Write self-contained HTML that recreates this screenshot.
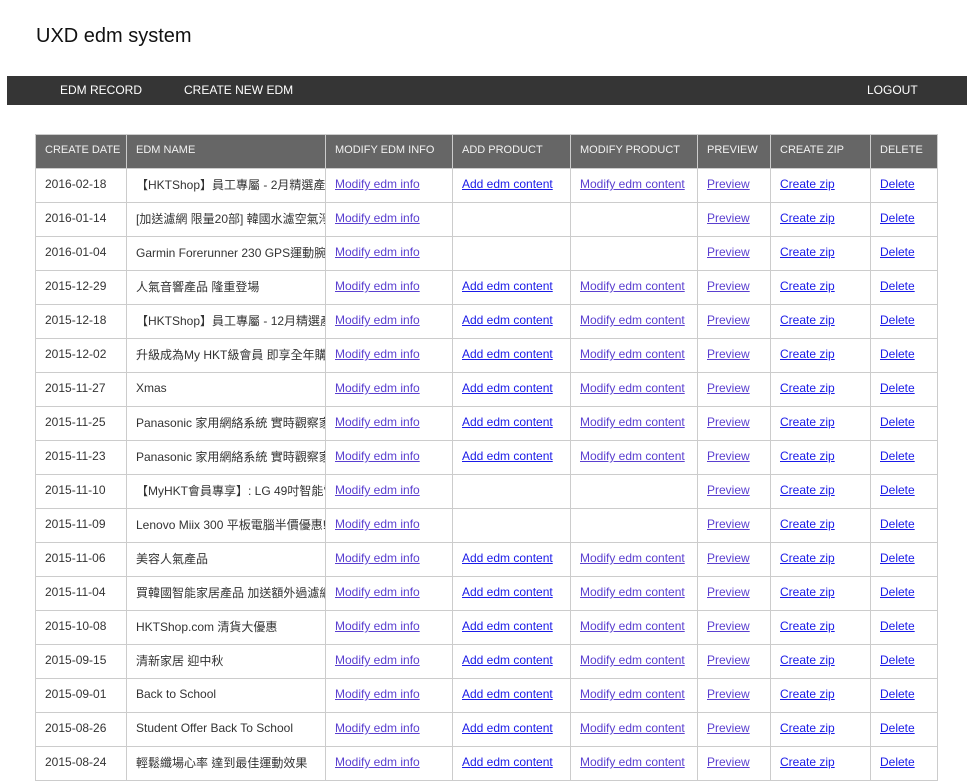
<!DOCTYPE html>
<html><head><meta charset="utf-8"><style>
html,body{margin:0;padding:0;background:#fff;width:976px;height:761px;overflow:hidden;font-family:"Liberation Sans","Noto Sans CJK TC",sans-serif;}
h1{position:absolute;left:36px;top:25px;margin:0;font-size:20px;font-weight:normal;color:#111;}
.nav{position:absolute;left:7px;top:76px;width:960px;height:29px;background:#353535;color:#fff;font-size:12px;}
.nav span{position:absolute;top:7px;}
table{position:absolute;left:35px;top:134px;border-collapse:collapse;table-layout:fixed;width:902px;font-size:12px;}
th,td{border:1px solid #ccc;white-space:nowrap;overflow:hidden;padding:0 9px;text-align:left;height:33px;}
th{background:#666;color:#f2f2f2;font-weight:normal;font-size:11px;padding-bottom:4px;height:29px;}
td{color:#333;padding-bottom:3px;height:30px;}
a{color:#1a1ae8;}
a.v{color:#5a3fd0;}
</style></head><body>
<h1>UXD edm system</h1>
<div class="nav"><span style="left:53px">EDM RECORD</span><span style="left:177px">CREATE NEW EDM</span><span style="left:860px">LOGOUT</span></div>
<table>
<colgroup><col style="width:91px"><col style="width:199px"><col style="width:127px"><col style="width:118px"><col style="width:127px"><col style="width:73px"><col style="width:100px"><col style="width:67px"></colgroup>
<tr><th>CREATE DATE</th><th>EDM NAME</th><th>MODIFY EDM INFO</th><th>ADD PRODUCT</th><th>MODIFY PRODUCT</th><th>PREVIEW</th><th>CREATE ZIP</th><th>DELETE</th></tr>
<tr><td>2016-02-18</td><td>【HKTShop】員工專屬 - 2月精選產品</td><td><a class="v" href="#">Modify edm info</a></td><td><a href="#">Add edm content</a></td><td><a class="v" href="#">Modify edm content</a></td><td><a class="v" href="#">Preview</a></td><td><a href="#">Create zip</a></td><td><a href="#">Delete</a></td></tr>
<tr><td>2016-01-14</td><td>[加送濾網 限量20部] 韓國水濾空氣淨化機</td><td><a class="v" href="#">Modify edm info</a></td><td></td><td></td><td><a class="v" href="#">Preview</a></td><td><a href="#">Create zip</a></td><td><a href="#">Delete</a></td></tr>
<tr><td>2016-01-04</td><td>Garmin Forerunner 230 GPS運動腕錶</td><td><a class="v" href="#">Modify edm info</a></td><td></td><td></td><td><a class="v" href="#">Preview</a></td><td><a href="#">Create zip</a></td><td><a href="#">Delete</a></td></tr>
<tr><td>2015-12-29</td><td>人氣音響產品 隆重登場</td><td><a class="v" href="#">Modify edm info</a></td><td><a href="#">Add edm content</a></td><td><a class="v" href="#">Modify edm content</a></td><td><a class="v" href="#">Preview</a></td><td><a href="#">Create zip</a></td><td><a href="#">Delete</a></td></tr>
<tr><td>2015-12-18</td><td>【HKTShop】員工專屬 - 12月精選產品</td><td><a class="v" href="#">Modify edm info</a></td><td><a href="#">Add edm content</a></td><td><a class="v" href="#">Modify edm content</a></td><td><a class="v" href="#">Preview</a></td><td><a href="#">Create zip</a></td><td><a href="#">Delete</a></td></tr>
<tr><td>2015-12-02</td><td>升級成為My HKT級會員 即享全年購物優惠</td><td><a class="v" href="#">Modify edm info</a></td><td><a href="#">Add edm content</a></td><td><a class="v" href="#">Modify edm content</a></td><td><a class="v" href="#">Preview</a></td><td><a href="#">Create zip</a></td><td><a href="#">Delete</a></td></tr>
<tr><td>2015-11-27</td><td>Xmas</td><td><a class="v" href="#">Modify edm info</a></td><td><a href="#">Add edm content</a></td><td><a class="v" href="#">Modify edm content</a></td><td><a class="v" href="#">Preview</a></td><td><a href="#">Create zip</a></td><td><a href="#">Delete</a></td></tr>
<tr><td>2015-11-25</td><td>Panasonic 家用網絡系統 實時觀察家居</td><td><a class="v" href="#">Modify edm info</a></td><td><a href="#">Add edm content</a></td><td><a class="v" href="#">Modify edm content</a></td><td><a class="v" href="#">Preview</a></td><td><a href="#">Create zip</a></td><td><a href="#">Delete</a></td></tr>
<tr><td>2015-11-23</td><td>Panasonic 家用網絡系統 實時觀察家居</td><td><a class="v" href="#">Modify edm info</a></td><td><a href="#">Add edm content</a></td><td><a class="v" href="#">Modify edm content</a></td><td><a class="v" href="#">Preview</a></td><td><a href="#">Create zip</a></td><td><a href="#">Delete</a></td></tr>
<tr><td>2015-11-10</td><td>【MyHKT會員專享】: LG 49吋智能電視</td><td><a class="v" href="#">Modify edm info</a></td><td></td><td></td><td><a class="v" href="#">Preview</a></td><td><a href="#">Create zip</a></td><td><a href="#">Delete</a></td></tr>
<tr><td>2015-11-09</td><td>Lenovo Miix 300 平板電腦半價優惠!</td><td><a class="v" href="#">Modify edm info</a></td><td></td><td></td><td><a class="v" href="#">Preview</a></td><td><a href="#">Create zip</a></td><td><a href="#">Delete</a></td></tr>
<tr><td>2015-11-06</td><td>美容人氣產品</td><td><a class="v" href="#">Modify edm info</a></td><td><a href="#">Add edm content</a></td><td><a class="v" href="#">Modify edm content</a></td><td><a class="v" href="#">Preview</a></td><td><a href="#">Create zip</a></td><td><a href="#">Delete</a></td></tr>
<tr><td>2015-11-04</td><td>買韓國智能家居產品 加送額外過濾網</td><td><a class="v" href="#">Modify edm info</a></td><td><a href="#">Add edm content</a></td><td><a class="v" href="#">Modify edm content</a></td><td><a class="v" href="#">Preview</a></td><td><a href="#">Create zip</a></td><td><a href="#">Delete</a></td></tr>
<tr><td>2015-10-08</td><td>HKTShop.com 清貨大優惠</td><td><a class="v" href="#">Modify edm info</a></td><td><a href="#">Add edm content</a></td><td><a class="v" href="#">Modify edm content</a></td><td><a class="v" href="#">Preview</a></td><td><a href="#">Create zip</a></td><td><a href="#">Delete</a></td></tr>
<tr><td>2015-09-15</td><td>清新家居 迎中秋</td><td><a class="v" href="#">Modify edm info</a></td><td><a href="#">Add edm content</a></td><td><a class="v" href="#">Modify edm content</a></td><td><a class="v" href="#">Preview</a></td><td><a href="#">Create zip</a></td><td><a href="#">Delete</a></td></tr>
<tr><td>2015-09-01</td><td>Back to School</td><td><a class="v" href="#">Modify edm info</a></td><td><a href="#">Add edm content</a></td><td><a class="v" href="#">Modify edm content</a></td><td><a class="v" href="#">Preview</a></td><td><a href="#">Create zip</a></td><td><a href="#">Delete</a></td></tr>
<tr><td>2015-08-26</td><td>Student Offer Back To School</td><td><a class="v" href="#">Modify edm info</a></td><td><a href="#">Add edm content</a></td><td><a class="v" href="#">Modify edm content</a></td><td><a class="v" href="#">Preview</a></td><td><a href="#">Create zip</a></td><td><a href="#">Delete</a></td></tr>
<tr><td>2015-08-24</td><td>輕鬆纖場心率 達到最佳運動效果</td><td><a class="v" href="#">Modify edm info</a></td><td><a href="#">Add edm content</a></td><td><a class="v" href="#">Modify edm content</a></td><td><a class="v" href="#">Preview</a></td><td><a href="#">Create zip</a></td><td><a href="#">Delete</a></td></tr>
</table>
</body></html>
